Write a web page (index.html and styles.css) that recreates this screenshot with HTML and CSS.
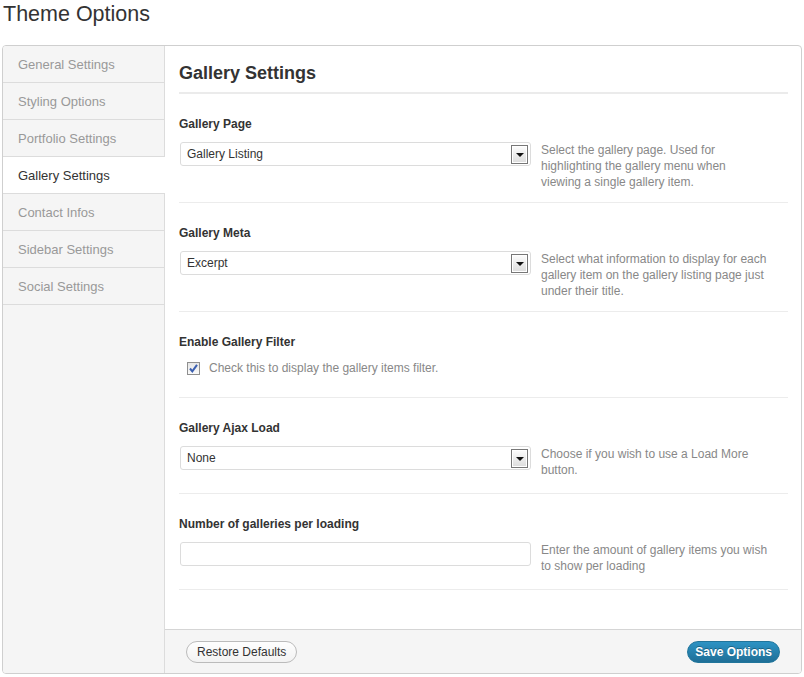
FILE: index.html
```html
<!DOCTYPE html>
<html>
<head>
<meta charset="utf-8">
<title>Theme Options</title>
<link rel="stylesheet" href="styles.css">
</head>
<body>
<div class="wrap">
  <h1 class="page-title">Theme Options</h1>
  <div class="panel">
    <ul class="sidebar">
      <li class="nav-item">General Settings</li>
      <li class="nav-item">Styling Options</li>
      <li class="nav-item">Portfolio Settings</li>
      <li class="nav-item active">Gallery Settings</li>
      <li class="nav-item">Contact Infos</li>
      <li class="nav-item">Sidebar Settings</li>
      <li class="nav-item">Social Settings</li>
    </ul>
    <div class="main">
      <div class="content">
        <h2 class="section-title">Gallery Settings</h2>

        <div class="option">
          <div class="option-label">Gallery Page</div>
          <div class="option-row">
            <div class="select"><span class="select-value">Gallery Listing</span><span class="select-btn"><span class="arrow"></span></span></div>
            <div class="desc">Select the gallery page. Used for highlighting the gallery menu when viewing a single gallery item.</div>
          </div>
        </div>

        <div class="option">
          <div class="option-label">Gallery Meta</div>
          <div class="option-row">
            <div class="select"><span class="select-value">Excerpt</span><span class="select-btn"><span class="arrow"></span></span></div>
            <div class="desc">Select what information to display for each gallery item on the gallery listing page just under their title.</div>
          </div>
        </div>

        <div class="option">
          <div class="option-label">Enable Gallery Filter</div>
          <div class="check-row">
            <span class="checkbox"><svg width="11" height="11" viewBox="0 0 11 11"><path d="M2 5.5 L4.3 8.3 L9 1.8" fill="none" stroke="#3b5fb0" stroke-width="2"/></svg></span>
            <span class="check-text">Check this to display the gallery items filter.</span>
          </div>
        </div>

        <div class="option">
          <div class="option-label">Gallery Ajax Load</div>
          <div class="option-row">
            <div class="select"><span class="select-value">None</span><span class="select-btn"><span class="arrow"></span></span></div>
            <div class="desc tall">Choose if you wish to use a Load More button.</div>
          </div>
        </div>

        <div class="option">
          <div class="option-label">Number of galleries per loading</div>
          <div class="option-row">
            <div class="text-input"></div>
            <div class="desc tall">Enter the amount of gallery items you wish to show per loading</div>
          </div>
        </div>
      </div>
      <div class="footer">
        <button class="btn btn-secondary">Restore Defaults</button>
        <button class="btn btn-primary">Save Options</button>
      </div>
    </div>
  </div>
</div>
</body>
</html>
```
FILE: styles.css
```css
html, body {
  margin: 0;
  padding: 0;
  background: #fff;
  font-family: "Liberation Sans", Arial, sans-serif;
  color: #333;
}

.wrap {
  padding: 0 2px;
}

.page-title {
  margin: 0 0 17px 0;
  padding-left: 1px;
  font-size: 21.5px;
  line-height: 28px;
  font-weight: normal;
  color: #333;
}

.panel {
  display: flex;
  width: 800px;
  box-sizing: border-box;
  border: 1px solid #cfcfcf;
  border-radius: 4px;
  overflow: hidden;
  background: #fff;
}

.sidebar {
  list-style: none;
  margin: 0;
  padding: 0;
  width: 162px;
  flex: none;
  box-sizing: border-box;
  background: #f5f5f5;
  border-right: 1px solid #dcdcdc;
}

.nav-item {
  height: 36px;
  line-height: 38px;
  padding-left: 15px;
  font-size: 13px;
  color: #999;
  border-bottom: 1px solid #dcdcdc;
}

.nav-item.active {
  background: #fff;
  color: #333;
  margin-right: -1px;
}

.main {
  flex: 1;
  display: flex;
  flex-direction: column;
  min-width: 0;
}

.content {
  padding: 0 13px 39px 14px;
}

.section-title {
  margin: 16px 0 0 0;
  padding-bottom: 8px;
  font-size: 18px;
  line-height: 22px;
  font-weight: bold;
  color: #333;
  border-bottom: 2px solid #ebebeb;
}

.option {
  padding: 22px 0 12px 0;
  border-bottom: 1px solid #ececec;
}

.option-label {
  font-size: 12px;
  line-height: 16px;
  font-weight: bold;
  color: #333;
  margin-bottom: 10px;
}

.option-row {
  display: flex;
  align-items: flex-start;
}

.select {
  margin-left: 1px;
  width: 351px;
  height: 24px;
  box-sizing: border-box;
  border: 1px solid #dcdcdc;
  border-radius: 3px;
  background: #fff;
  display: flex;
  align-items: center;
  justify-content: space-between;
  padding: 0 2px 0 6px;
  flex: none;
}

.select-value {
  font-size: 12px;
  color: #333;
}

.select-btn {
  width: 17px;
  height: 19px;
  box-sizing: border-box;
  border: 1px solid #777;
  background: linear-gradient(#fdfdfd, #dcdcdc);
  box-shadow: inset 0 0 0 1px #fff;
  display: flex;
  align-items: center;
  justify-content: center;
}

.arrow {
  width: 0;
  height: 0;
  border-left: 4px solid transparent;
  border-right: 4px solid transparent;
  border-top: 4px solid #111;
  margin-top: 1px;
}

.text-input {
  margin-left: 1px;
  width: 351px;
  height: 24px;
  box-sizing: border-box;
  border: 1px solid #dcdcdc;
  border-radius: 3px;
  background: #fff;
  flex: none;
}

.desc {
  margin-left: 10px;
  width: 227.5px;
  font-size: 12px;
  line-height: 16px;
  color: #888;
}

.desc.tall {
  min-height: 35px;
}

.check-row {
  height: 25px;
  box-sizing: border-box;
  padding: 2px 0 0 8px;
  display: flex;
  align-items: flex-start;
}

.checkbox {
  width: 13px;
  height: 13px;
  box-sizing: border-box;
  border: 1px solid #8f8f8f;
  background: linear-gradient(#e6e6e6, #fafafa);
  display: flex;
  align-items: center;
  justify-content: center;
  flex: none;
}

.check-text {
  margin-left: 9px;
  font-size: 12px;
  line-height: 13px;
  color: #888;
}

.footer {
  border-top: 1px solid #d5d5d5;
  background: #f5f5f5;
  padding: 11px 21px 10px 21px;
  display: flex;
  justify-content: space-between;
  align-items: center;
}

.btn {
  height: 22px;
  box-sizing: border-box;
  border-radius: 11px;
  font-family: "Liberation Sans", Arial, sans-serif;
  font-size: 12px;
  line-height: 20px;
  margin: 0;
}

.btn-secondary {
  padding: 0 10px;
  border: 1px solid #bbb;
  background: linear-gradient(#fefefe, #f2f2f2);
  color: #333;
}

.btn-primary {
  padding: 0 7px;
  border: 1px solid #21759b;
  background: linear-gradient(#2d93c4, #1f6f97);
  color: #fff;
  font-weight: bold;
  text-shadow: 0 -1px 0 rgba(0,0,0,0.3);
}
```
